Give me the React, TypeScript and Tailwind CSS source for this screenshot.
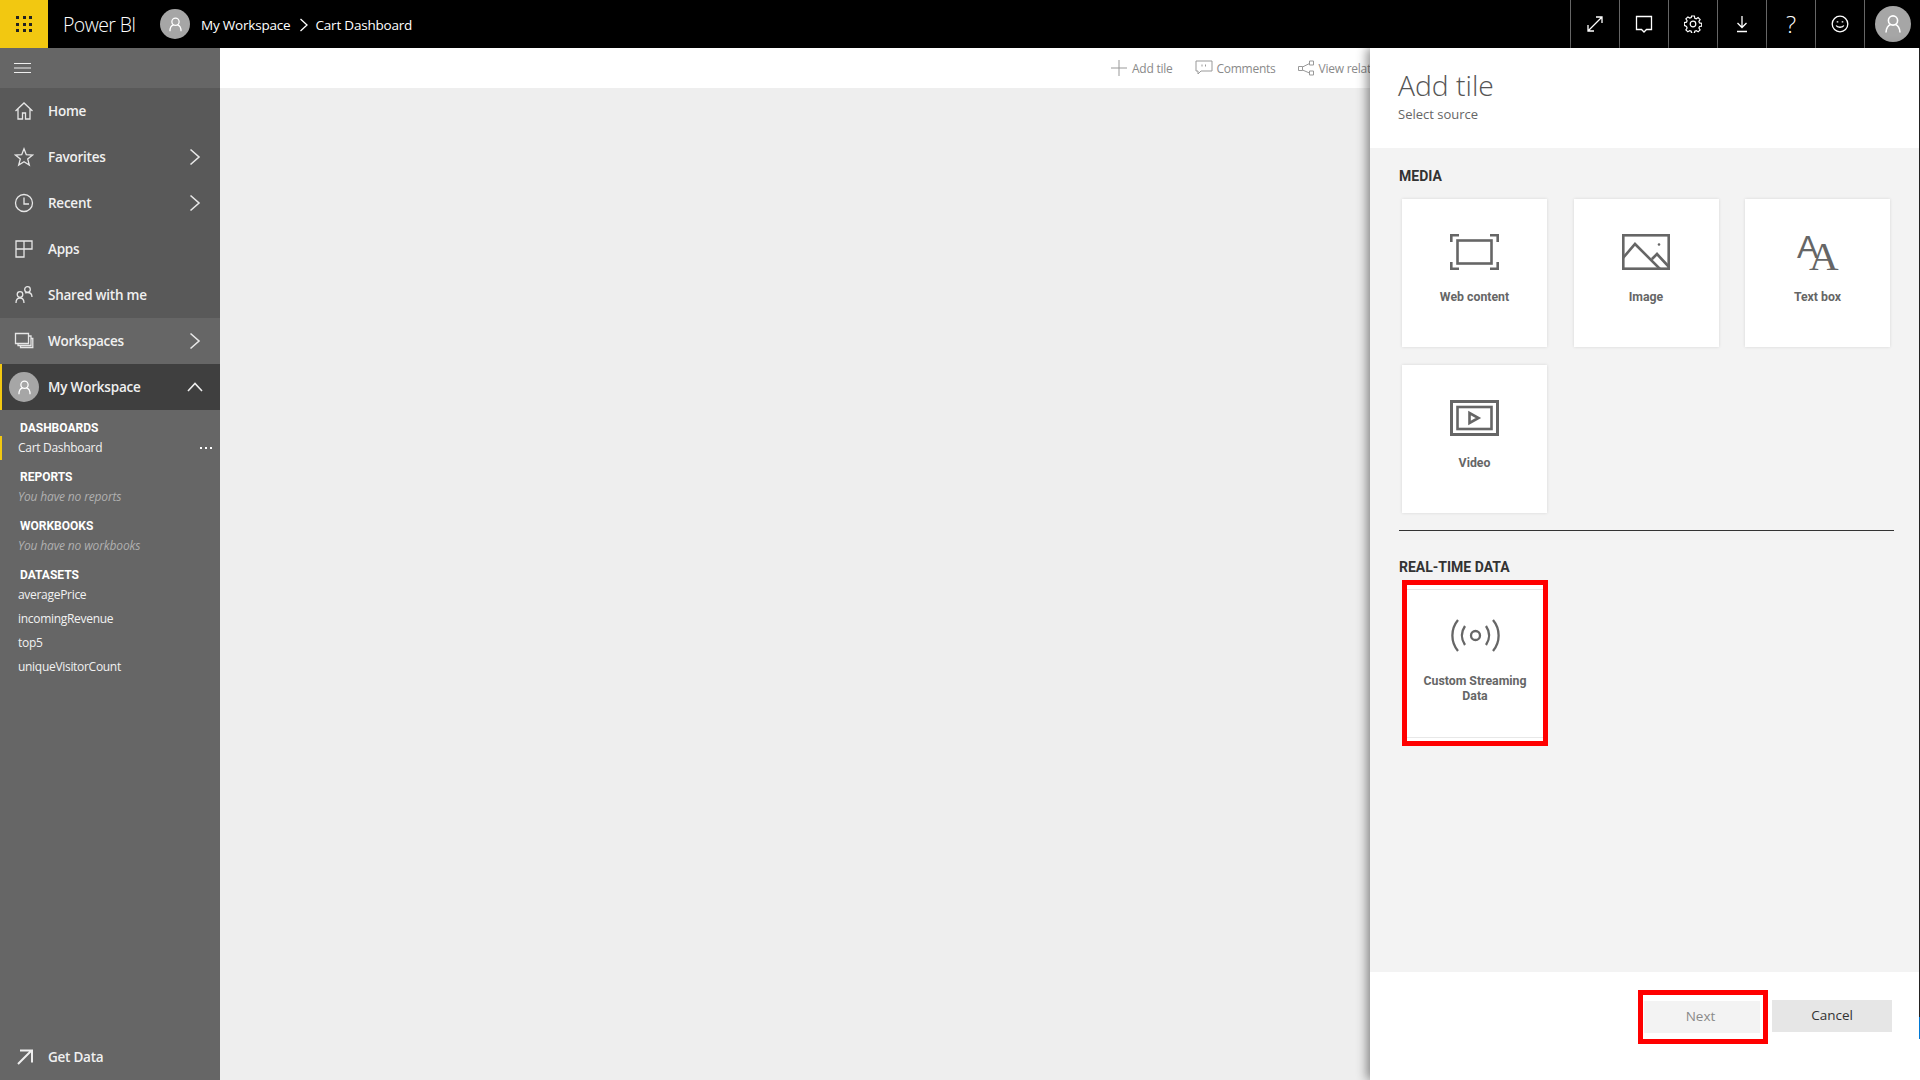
import React from "react";

const Person = ({ size }: { size: number }) => (
  <svg width={size} height={size} viewBox="0 0 24 24" fill="none" stroke="#fff" strokeWidth="1.6">
    <circle cx="12" cy="8.5" r="4.6" />
    <path d="M5 20.5c0-4.4 2.4-7.4 4.6-8M19 20.5c0-4.4-2.4-7.4-4.6-8" />
  </svg>
);

const Avatar = ({ cls, size }: { cls: string; size: number }) => (
  <div className={`flex items-center justify-center rounded-full bg-[#a6a6a6] ${cls}`}>
    <Person size={size} />
  </div>
);

const Chevron = () => (
  <svg width="12" height="18" viewBox="0 0 12 18" fill="none" stroke="#e8e8e8" strokeWidth="1.6">
    <path d="M1.5 1.5 10 9l-8.500 7.500" />
  </svg>
);

const s = { fill: "none", stroke: "#e6e6e6", strokeWidth: 1.3 };

const navIcons: Record<string, React.ReactNode> = {
  home: (
    <svg width="20" height="20" viewBox="0 0 20 20" {...s}>
      <path d="M1.500 10 10 2l8.500 8M4 8v10h4.500v-6h3v6H16V8" />
    </svg>
  ),
  star: (
    <svg width="20" height="20" viewBox="0 0 20 20" {...s}>
      <path d="m10 1.800 2.300 5.900 6.200.4-4.800 3.900 1.600 6.100L10 14.700l-5.300 3.400 1.600-6.100-4.800-3.900 6.200-.4z" />
    </svg>
  ),
  clock: (
    <svg width="20" height="20" viewBox="0 0 20 20" {...s}>
      <circle cx="10" cy="10" r="8.500" />
      <path d="M10 4.500V11H15" />
    </svg>
  ),
  apps: (
    <svg width="20" height="20" viewBox="0 0 20 20" {...s}>
      <path d="M2 2h16v8h-8v8H2zM2 10h8V2" />
    </svg>
  ),
  shared: (
    <svg width="20" height="20" viewBox="0 0 20 20" {...s}>
      <circle cx="13.500" cy="4.500" r="2.800" />
      <circle cx="6" cy="9.500" r="2.800" />
      <path d="M2 18c0-3 1.500-5 4-5s4 2 4 5M11 8c.9-.4 1.800-.5 2.500-.5 2.500 0 4.500 1.500 4.500 4.500" />
    </svg>
  ),
  workspaces: (
    <svg width="20" height="20" viewBox="0 0 20 20" {...s}>
      <path d="M1.500 2.500h13v10h-13zM14.500 5h2.500v9.500H4V12.500M17 7.500h1.800v9H6.500V14.500" />
    </svg>
  ),
};

const NavRow = ({ icon, label, chevron, cls }: { icon: string; label: string; chevron?: boolean; cls?: string }) => (
  <div className={`flex h-[46px] items-center pl-[14px] pr-[19px] ${cls ?? ""}`}>
    <div className="flex w-[34px] shrink-0 items-center">{navIcons[icon]}</div>
    <span className="flex-1 text-[13.5px] font-semibold tracking-[-0.25px] text-[#f0f0f0]">{label}</span>
    {chevron && <Chevron />}
  </div>
);

const SectionHead = ({ children }: { children: React.ReactNode }) => (
  <div className="flex h-4 items-center pl-5 font-['Roboto',sans-serif] text-[12px] font-bold text-white">{children}</div>
);

const SubItem = ({ children }: { children: React.ReactNode }) => (
  <div className="flex h-6 items-center pl-[18px] text-[12px] tracking-[-0.3px] text-[#f2f2f2]">{children}</div>
);

const Empty = ({ children }: { children: React.ReactNode }) => (
  <div className="flex h-6 items-center pl-[18px] text-[12px] italic tracking-[-0.15px] text-[#b0b0b0]">{children}</div>
);

const Sidebar = () => (
  <aside className="flex w-[220px] shrink-0 flex-col bg-[#666666]">
    <div className="flex h-10 items-center pl-[14px]">
      <svg width="17" height="10" viewBox="0 0 17 10" stroke="#eee" strokeWidth="1">
        <path d="M0 .5h17M0 5h17M0 9.500h17" />
      </svg>
    </div>
    <div className="bg-[#595959]">
      <NavRow icon="home" label="Home" />
      <NavRow icon="star" label="Favorites" chevron />
      <NavRow icon="clock" label="Recent" chevron />
      <NavRow icon="apps" label="Apps" />
      <NavRow icon="shared" label="Shared with me" />
    </div>
    <NavRow icon="workspaces" label="Workspaces" chevron />
    <div className="flex h-[46px] items-center border-l-2 border-[#f2c811] bg-[#3f3f3f] pl-[7px] pr-[17px]">
      <Avatar cls="h-[30px] w-[30px] shrink-0" size={19} />
      <span className="ml-[9px] flex-1 text-[13.5px] font-semibold tracking-[-0.2px] text-[#f0f0f0]">My Workspace</span>
      <svg width="16" height="10" viewBox="0 0 16 10" fill="none" stroke="#eee" strokeWidth="1.600">
        <path d="M1 9 8 1.500 15 9" />
      </svg>
    </div>
    <div className="pt-[10px]">
      <SectionHead>DASHBOARDS</SectionHead>
      <div className="flex h-6 items-center border-l-2 border-[#f2c811] pl-4 pr-2 text-[12px] tracking-[-0.3px] text-[#f2f2f2]">
        <span className="flex-1">Cart Dashboard</span>
        <span className="flex gap-[3px]">
          <i className="h-[2px] w-[2px] bg-white" />
          <i className="h-[2px] w-[2px] bg-white" />
          <i className="h-[2px] w-[2px] bg-white" />
        </span>
      </div>
      <div className="mt-[9px]">
        <SectionHead>REPORTS</SectionHead>
        <Empty>You have no reports</Empty>
      </div>
      <div className="mt-[9px]">
        <SectionHead>WORKBOOKS</SectionHead>
        <Empty>You have no workbooks</Empty>
      </div>
      <div className="mt-[9px]">
        <SectionHead>DATASETS</SectionHead>
        <SubItem>averagePrice</SubItem>
        <SubItem>incomingRevenue</SubItem>
        <SubItem>top5</SubItem>
        <SubItem>uniqueVisitorCount</SubItem>
      </div>
    </div>
    <div className="mt-auto flex h-[46px] items-center pl-[16px]">
      <svg width="18" height="18" viewBox="0 0 18 18" fill="none" stroke="#eee" strokeWidth="2">
        <path d="M2 16 15.500 2.500M4 2.500h12v12" />
      </svg>
      <span className="ml-[14px] text-[13.5px] font-semibold tracking-[-0.25px] text-[#f0f0f0]">Get Data</span>
    </div>
  </aside>
);

const topIcons: React.ReactNode[] = [
  <svg key="a" width="18" height="18" viewBox="0 0 18 18" fill="none" stroke="#fff" strokeWidth="1.300">
    <path d="M2 16 16 2M10 2h6v6M2 10v6h6" />
  </svg>,
  <svg key="b" width="18" height="18" viewBox="0 0 18 18" fill="none" stroke="#fff" strokeWidth="1.300">
    <path d="M1.500 1.500h15v13h-5L9 17l-2.500-2.500h-5z" />
  </svg>,
  <svg key="c" width="18" height="18" viewBox="0 0 18 18" fill="none" stroke="#fff" strokeWidth="1.200">
    <circle cx="9" cy="9" r="2.800" />
    <path d="M7.600 1h2.800l.4 2.200 1.500.6 1.800-1.200 2 2-1.200 1.800.6 1.500 2.200.4v2.800l-2.200.4-.6 1.500 1.200 1.800-2 2-1.800-1.200-1.500.6-.4 2.200H7.600l-.4-2.200-1.500-.6-1.800 1.200-2-2 1.200-1.800-.6-1.500L.3 10.400V7.600l2.200-.4.600-1.500L1.900 3.900l2-2 1.800 1.200 1.500-.6z" />
  </svg>,
  <svg key="d" width="18" height="18" viewBox="0 0 18 18" fill="none" stroke="#fff" strokeWidth="1.300">
    <path d="M9 1v11M4.500 8 9 12.500 13.500 8M4 16.500h10" />
  </svg>,
  <span key="e" className="text-[24px] font-light leading-none text-white">?</span>,
  <svg key="f" width="18" height="18" viewBox="0 0 18 18" fill="none" stroke="#fff" strokeWidth="1.300">
    <circle cx="9" cy="9" r="7.800" />
    <path d="M5.200 10.500c1 2.300 6.600 2.300 7.600 0" />
    <path d="M6.500 6.200v1.300M11.500 6.200v1.300" strokeWidth="1.600" />
  </svg>,
];

const TopBar = () => (
  <header className="flex h-12 shrink-0 items-center bg-black text-white">
    <div className="grid h-12 w-12 place-items-center bg-[#f2c811]">
      <div className="grid grid-cols-[3px_3px_3px] gap-[3.500px]">
        {Array.from({ length: 9 }).map((_, i) => (
          <i key={i} className="h-[3px] w-[3px] bg-[#222]" />
        ))}
      </div>
    </div>
    <span className="ml-[15px] w-[97px] pt-[1px] text-[19.5px] font-light leading-none tracking-[-0.6px]">Power BI</span>
    <Avatar cls="h-[30px] w-[30px]" size={19} />
    <span className="ml-[11px] pt-[3px] text-[13.5px] tracking-[-0.2px]">My Workspace</span>
    <svg className="ml-[9px] mt-[2px]" width="10" height="14" viewBox="0 0 10 14" fill="none" stroke="#fff" strokeWidth="1.300">
      <path d="M1.500 1 8 7l-6.500 6" />
    </svg>
    <span className="ml-[6px] pt-[3px] text-[13.5px] tracking-[-0.2px]">Cart Dashboard</span>
    <div className="ml-auto flex h-12">
      {topIcons.map((ic, i) => (
        <div key={i} className="grid h-12 w-[49px] place-items-center border-l border-[#666]">{ic}</div>
      ))}
      <div className="flex h-12 w-[56px] items-center border-l border-[#666] pl-[10px]">
        <Avatar cls="h-9 w-9" size={24} />
      </div>
    </div>
  </header>
);

const Toolbar = () => (
  <div className="flex h-10 items-center overflow-hidden whitespace-nowrap bg-white pl-[891px] text-[12px] tracking-[-0.25px] text-[#8a8a8a]">
    <svg className="shrink-0" width="16" height="16" viewBox="0 0 16 16" stroke="#999" strokeWidth="1">
      <path d="M8 0v16M0 8h16" />
    </svg>
    <span className="ml-[5px] pt-[2px]">Add tile</span>
    <svg className="ml-[23px] shrink-0" width="18" height="16" viewBox="0 0 18 16" fill="none" stroke="#999" strokeWidth="1">
      <path d="M1 1h16v10H6l-3 3v-3H1zM7 4.500v2M10.500 4.500v2" />
    </svg>
    <span className="ml-[3px] pt-[2px]">Comments</span>
    <svg className="ml-[22px] shrink-0" width="16" height="16" viewBox="0 0 16 16" fill="none" stroke="#999" strokeWidth="1">
      <path d="M.5 6.500h4v4h-4zM11.500 1h4v4h-4zM11.500 11h4v4h-4zM4.500 7l7-3.500M4.500 10l7 3" />
    </svg>
    <span className="ml-[5px] pt-[2px]">View related</span>
  </div>
);

const g = { fill: "none", stroke: "#666", strokeWidth: 2.600 };

const WebIcon = () => (
  <svg width="49" height="36" viewBox="0 0 49 36" {...g}>
    <path d="M9 1.300H1.300V8M40 1.300h7.700V8M9 34.700H1.300V28M40 34.700h7.700V28" />
    <rect x="7.500" y="6.500" width="34" height="23" />
  </svg>
);

const ImageIcon = () => (
  <svg width="48" height="36" viewBox="0 0 48 36" {...g}>
    <rect x="1.300" y="1.300" width="45.400" height="33.400" />
    <path d="M1 24 13 10l26 26M30 25l5-5 12 13" />
    <circle cx="37" cy="10.500" r="1.300" fill="#666" stroke="none" />
  </svg>
);

const TextIcon = () => (
  <svg className="-my-[6px] overflow-visible" width="46" height="48" viewBox="0 0 46 48">
    <text x="2" y="30" fontFamily="Liberation Sans, sans-serif" fontSize="32" fill="#666">A</text>
    <text x="14" y="42" fontFamily="Liberation Serif, serif" fontSize="41" fill="#666">A</text>
  </svg>
);

const VideoIcon = () => (
  <svg width="49" height="36" viewBox="0 0 49 36" {...g}>
    <rect x="1.500" y="1.500" width="46" height="33" strokeWidth="3" />
    <rect x="7.500" y="7" width="34" height="22" />
    <path d="M19.500 13v10l9-5z" />
  </svg>
);

const StreamIcon = () => (
  <svg width="49" height="33" viewBox="0 0 49 33" fill="none" stroke="#666" strokeWidth="2.300">
    <circle cx="24.500" cy="16.500" r="4.500" />
    <path d="M7 1C-.5 10-.5 23 7 32M42 1c7.500 9 7.500 22 0 31M14 7c-4 6-4 13 0 19M35 7c4 6 4 13 0 19" />
  </svg>
);

const Label = ({ children }: { children: React.ReactNode }) => (
  <div className="text-center font-['Roboto',sans-serif] text-[12.3px] font-bold leading-[15px] text-[#666]">{children}</div>
);

const Card = ({ icon, label }: { icon: React.ReactNode; label: string }) => (
  <div className="flex h-[148px] w-[145px] flex-col items-center bg-white pt-[35px] shadow-[0_0_3px_rgba(0,0,0,0.12)]">
    <div className="flex h-9 items-center">{icon}</div>
    <div className="mt-[20px]">
      <Label>{label}</Label>
    </div>
  </div>
);

const Heading = ({ children }: { children: React.ReactNode }) => (
  <div className="flex h-4 items-center pt-[1px] font-['Roboto',sans-serif] text-[14px] font-bold text-[#333]">{children}</div>
);

const Panel = () => (
  <section className="relative z-10 flex w-[550px] shrink-0 flex-col bg-white shadow-[-3px_0_10px_rgba(0,0,0,0.45)]">
    <div className="h-[100px] shrink-0 pl-7 pt-[19px]">
      <h1 className="text-[28.3px] font-light leading-9 text-[#555]">Add tile</h1>
      <p className="text-[13px] leading-[22px] text-[#666]">Select source</p>
    </div>
    <div className="flex-1 bg-[#f3f3f3] pl-[29px] pr-[26px] pt-5">
      <Heading>MEDIA</Heading>
      <div className="ml-[3px] mt-[15px] grid grid-cols-[145px_145px_145px] gap-x-[26.500px] gap-y-[18px]">
        <Card icon={<WebIcon />} label="Web content" />
        <Card icon={<ImageIcon />} label="Image" />
        <Card icon={<TextIcon />} label="Text box" />
        <Card icon={<VideoIcon />} label="Video" />
      </div>
      <div className="mt-[17px] h-px bg-[#333]" />
      <div className="mt-[28px]">
        <Heading>REAL-TIME DATA</Heading>
      </div>
      <div className="ml-[3px] mt-[5px] h-[166px] w-[146px] border-[5px] border-[#ff0000] bg-white pt-[4px]">
        <div className="flex h-[149px] flex-col items-center border-y border-[#e8e8e8] pt-[29px]">
          <StreamIcon />
          <div className="mt-[22px] w-[120px]">
            <Label>Custom Streaming Data</Label>
          </div>
        </div>
      </div>
    </div>
    <div className="flex h-[108px] shrink-0 justify-end gap-1 pr-7 pt-[18px]">
      <div className="flex h-[54px] w-[130px] items-center border-[5px] border-[#ff0000] pl-px pr-[3px]">
        <button className="h-8 w-[116px] bg-[#f3f3f3] pb-[2px] pr-[3px] text-[13.5px] text-[#8a8a8a]">Next</button>
      </div>
      <button className="mt-[10px] h-8 w-[120px] bg-[#e6e6e6] pb-[2px] text-[13.5px] text-[#333]">Cancel</button>
    </div>
    <div className="absolute right-0 top-0 h-[969px] w-px bg-[#222]" />
    <div className="absolute right-0 top-[969px] h-[22px] w-px bg-[#0078d4]" />
  </section>
);

export default function App() {
  return (
    <div className="flex h-[1080px] w-[1920px] flex-col overflow-hidden bg-[#eeeeee] font-['Open_Sans',sans-serif]">
      <TopBar />
      <div className="flex min-h-0 flex-1">
        <Sidebar />
        <main className="min-w-0 flex-1">
          <Toolbar />
        </main>
        <Panel />
      </div>
    </div>
  );
}
